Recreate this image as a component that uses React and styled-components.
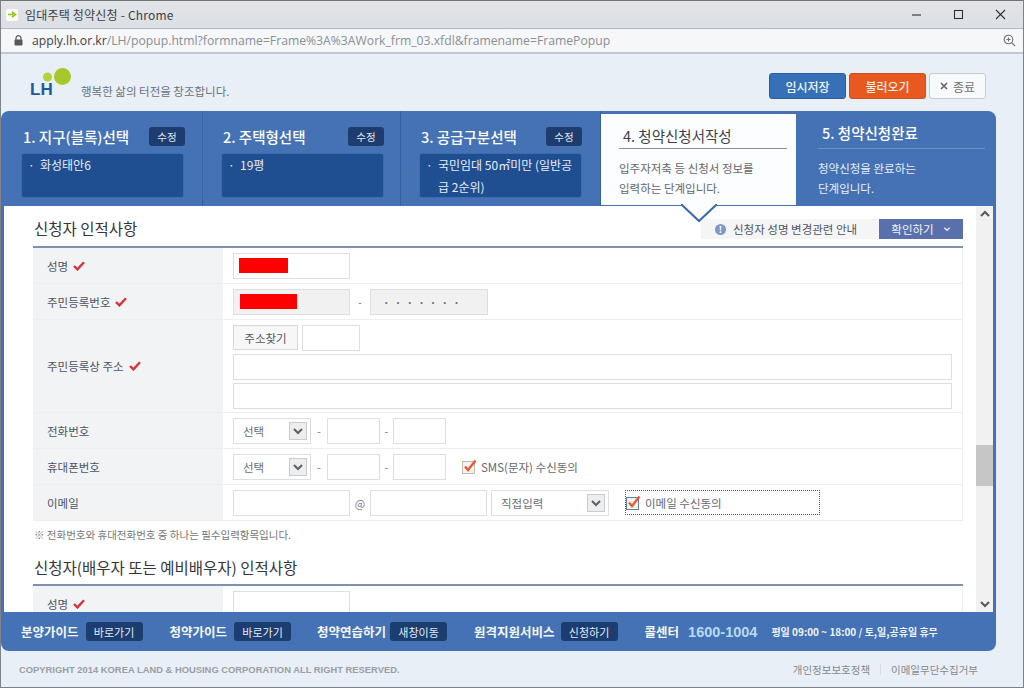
import React from "react";
import styled, { createGlobalStyle } from "styled-components";

const KR = `"Noto Sans CJK KR", "Noto Sans", sans-serif`;

const GlobalStyle = createGlobalStyle`
  html, body { margin: 0; padding: 0; background: #e8eff7; }
  * { box-sizing: border-box; }
  body { font-family: ${KR}; overflow: hidden; }
`;

const Page = styled.div`
  width: 1024px;
  height: 688px;
  display: flex;
  flex-direction: column;
  overflow: hidden;
  position: relative;
  border: 1px solid #7e8388;
  border-top-color: #6f7478;
  background: #e8eff7;
`;

const TitleBar = styled.div`
  height: 28px;
  display: flex;
  align-items: center;
  padding: 0 14px 0 5px;
  background: linear-gradient(#e2e4e7, #dcdfe5);
  border-bottom: 1px solid #b4b8bd;
  color: #3c3f44;
  font-size: 12px;
  flex: none;
`;

const Favicon = styled.span`
  width: 12px;
  height: 12px;
  margin-right: 7px;
  background: #fbfbf4;
  border-radius: 2px;
  display: flex;
  align-items: center;
  justify-content: center;
`;

const TitleText = styled.span`
  flex: 1;
  letter-spacing: 0.2px;
`;

const WindowButtons = styled.div`
  display: flex;
  align-items: center;
  gap: 26px;
`;

const UrlBar = styled.div`
  height: 25px;
  display: flex;
  align-items: center;
  padding: 0 7px 0 13px;
  background: #f6f7f9;
  border-bottom: 2px solid #c5c8cc;
  font-family: "Open Sans", "Noto Sans", sans-serif;
  font-size: 12.2px;
  color: #8a8f96;
  flex: none;
`;

const Host = styled.span`
  color: #3f4347;
  margin-left: 9px;
`;

const Path = styled.span`
  flex: 1;
`;

const TopBar = styled.div`
  height: 57px;
  flex: none;
  display: flex;
  align-items: flex-start;
  justify-content: space-between;
  padding: 12px 37px 0 29px;
`;

const Logo = styled.div`
  position: relative;
  display: flex;
  align-items: flex-end;
  height: 32px;
`;

const LogoMark = styled.div`
  position: relative;
  width: 44px;
  height: 32px;
`;

const LogoBalls = styled.svg`
  position: absolute;
  left: 11px;
  top: 0;
`;

const LogoLetters = styled.span`
  position: absolute;
  left: 0;
  bottom: 0;
  font-family: "Liberation Sans", sans-serif;
  font-weight: 700;
  font-size: 17px;
  line-height: 17px;
  color: #1d5a9c;
`;

const Slogan = styled.span`
  margin-left: 7px;
  font-size: 11.5px;
  line-height: 17px;
  color: #6c7176;
  margin-bottom: -2px;
`;

const TopActions = styled.div`
  display: flex;
  gap: 3px;
  padding-top: 7px;
`;

const ActionButton = styled.button`
  width: ${(p) => p.$w}px;
  height: 26px;
  padding: 0;
  border-radius: 3px;
  border: 1px solid ${(p) => p.$edge};
  background: ${(p) => p.$bg};
  color: ${(p) => p.$fg};
  font-family: ${KR};
  font-size: 12px;
  font-weight: ${(p) => p.$weight};
  display: flex;
  align-items: center;
  justify-content: center;
  gap: 5px;
`;

const Panel = styled.div`
  width: 995px;
  height: 540px;
  flex: none;
  display: flex;
  flex-direction: column;
  background: #4472b5;
  border-radius: 8px;
  position: relative;
`;

const Steps = styled.div`
  height: 95px;
  flex: none;
  display: flex;
`;

const Step = styled.div`
  width: ${(p) => p.$w}px;
  flex: none;
  padding: 15px 0 0 ${(p) => p.$pad}px;
  border-right: 1px solid #35619f;
`;

const StepHead = styled.div`
  width: ${(p) => p.$w}px;
  height: 20px;
  display: flex;
  align-items: center;
  justify-content: space-between;
`;

const StepTitle = styled.span`
  font-size: 14.5px;
  font-weight: 500;
  color: #fff;
  padding-left: 2px;
`;

const Edit = styled.span`
  width: 36px;
  height: 19px;
  border-radius: 3px;
  background: #1e3c6e;
  color: #dfe7f3;
  font-size: 10.5px;
  display: flex;
  align-items: center;
  justify-content: center;
`;

const StepValue = styled.div`
  width: 163px;
  height: 45px;
  margin-top: 7px;
  padding: 0 6px 0 18px;
  position: relative;
  background: #1f4f91;
  border: 1px solid #3d6cae;
  border-radius: 3px;
  color: #e6edf7;
  font-size: 12px;
  line-height: 22px;

  &::before {
    content: "·";
    position: absolute;
    left: 6px;
    top: 0;
  }
`;

const ActiveStep = styled.div`
  width: 195px;
  height: 91px;
  margin-top: 3px;
  padding: 12px 9px 0 18px;
  flex: none;
  background: #fbfdff;
`;

const ActiveTitle = styled.div`
  height: 23px;
  padding-left: 4px;
  font-size: 14.5px;
  line-height: 19px;
  color: #3d4148;
  border-bottom: 1px solid #8c9096;
`;

const StepDesc = styled.p`
  margin: 9px 0 0;
  font-size: 11.5px;
  line-height: 20px;
  color: ${(p) => p.$fg};
`;

const LastStep = styled.div`
  width: 200px;
  flex: none;
  padding: 12px 11px 0 22px;
`;

const LastTitle = styled.div`
  height: 26px;
  padding-left: 4px;
  font-size: 14.5px;
  font-weight: 500;
  line-height: 20px;
  color: #fff;
  border-bottom: 1px solid #6a92c9;
`;

const Pointer = styled.svg`
  position: absolute;
  left: 680px;
  top: 93px;
`;

const Body = styled.div`
  height: 406px;
  margin: 0 3px 0 3px;
  flex: none;
  display: flex;
  background: #fff;
  overflow: hidden;
`;

const Scroller = styled.div`
  width: 972px;
  flex: none;
  overflow: hidden;
  padding-left: 29px;
  padding-right: 13px;
`;

const SectionHead = styled.div`
  height: ${(p) => p.$h}px;
  display: flex;
  align-items: ${(p) => p.$align};
  justify-content: space-between;
  border-bottom: 2px solid #7d93ad;
`;

const SectionTitle = styled.h2`
  margin: 0;
  padding-left: 1px;
  font-size: 15.5px;
  line-height: 22px;
  font-weight: 400;
  color: #33373d;
`;

const Notice = styled.div`
  width: 262px;
  height: 20px;
  margin-top: 13px;
  margin-bottom: 8px;
  display: flex;
  align-items: center;
  background: #f5f5f6;
  font-size: 11.5px;
  color: #4d5561;
`;

const NoticeIcon = styled.span`
  width: 11px;
  height: 11px;
  margin: 0 7px 0 14px;
  border-radius: 50%;
  background: #7f97c6;
  color: #fff;
  font-size: 9px;
  font-weight: 700;
  line-height: 11px;
  text-align: center;
`;

const NoticeText = styled.span`
  flex: 1;
`;

const ConfirmButton = styled.button`
  width: 84px;
  height: 20px;
  padding: 0;
  border: 0;
  background: #5a70ac;
  color: #f2f4fa;
  font-family: ${KR};
  font-size: 11.5px;
  display: flex;
  align-items: center;
  justify-content: center;
  gap: 9px;
`;

const Table = styled.div`
  border-right: 1px solid #eceef0;
`;

const Row = styled.div`
  display: flex;
  height: ${(p) => p.$h}px;
  border-bottom: 1px solid #eceef0;
`;

const Label = styled.div`
  width: 190px;
  flex: none;
  padding-left: 14px;
  display: flex;
  align-items: center;
  gap: 5px;
  background: #f2f3f5;
  font-size: 11.5px;
  color: #4a5464;
`;

const Cell = styled.div`
  flex: 1;
  padding-left: 10px;
  display: flex;
  align-items: center;
`;

const StackCell = styled.div`
  flex: 1;
  padding: 5px 10px 0;
  display: flex;
  flex-direction: column;
  gap: 3px;
`;

const InlineGroup = styled.div`
  display: flex;
  gap: 4px;
`;

const Field = styled.div`
  width: ${(p) => (p.$w ? `${p.$w}px` : "100%")};
  height: 26px;
  flex: none;
  display: flex;
  align-items: center;
  padding-left: ${(p) => p.$pl || 0}px;
  border: 1px solid #dcdee0;
  background: ${(p) => (p.$off ? "#f1f1f2" : "#fff")};
  color: #77797d;
  font-size: 11px;
`;

const Redact = styled.span`
  width: ${(p) => p.$w}px;
  height: 15px;
  background: #f00;
`;

const Dots = styled.span`
  letter-spacing: 5.2px;
  font-size: 11px;
  font-weight: 700;
  color: #6c7075;
`;

const Sep = styled.span`
  width: ${(p) => p.$w}px;
  flex: none;
  text-align: center;
  font-size: 11px;
  color: #7a7d82;
`;

const FindButton = styled.button`
  width: 65px;
  height: 25px;
  padding: 0;
  border: 1px solid #d8d9db;
  background: #f7f7f7;
  color: #55585d;
  font-family: ${KR};
  font-size: 11.5px;
`;

const Select = styled.div`
  width: ${(p) => p.$w}px;
  height: 26px;
  flex: none;
  padding: 0 3px 0 9px;
  display: flex;
  align-items: center;
  justify-content: space-between;
  border: 1px solid #dcdee0;
  background: #fff;
  color: #6b6e73;
  font-size: 11.5px;
`;

const SelectArrow = styled.span`
  width: 18px;
  height: 18px;
  display: flex;
  align-items: center;
  justify-content: center;
  border: 1px solid #c8cccf;
  background: #eceef0;
`;

const Agree = styled.label`
  display: flex;
  align-items: center;
  margin-left: ${(p) => p.$ml}px;
  gap: 4px;
  color: #66696e;
  font-size: 11.5px;
`;

const FocusBox = styled.div`
  width: 195px;
  height: 25px;
  margin-left: 16px;
  display: flex;
  align-items: center;
  border: 1px dotted #555;
`;

const Note = styled.p`
  margin: 0;
  height: 28px;
  padding-left: 1px;
  font-size: 10.5px;
  line-height: 28px;
  color: #74777c;
`;

const Scrollbar = styled.div`
  width: 17px;
  flex: none;
  display: flex;
  flex-direction: column;
  align-items: center;
  background: #f1f1f1;
`;

const ScrollArrow = styled.div`
  height: 17px;
  flex: none;
  display: flex;
  align-items: center;
  justify-content: center;
`;

const ScrollTrack = styled.div`
  flex: 1;
  width: 100%;
  display: flex;
  flex-direction: column;
  padding-top: 222px;
`;

const ScrollThumb = styled.div`
  height: 41px;
  background: #c6c6c6;
`;

const FootBar = styled.div`
  flex: 1;
  display: flex;
  align-items: center;
  padding-left: 20px;
`;

const GuideItem = styled.div`
  display: flex;
  align-items: center;
  margin-right: ${(p) => p.$mr}px;
  gap: ${(p) => p.$gap}px;
`;

const GuideName = styled.span`
  font-size: 12.5px;
  font-weight: 700;
  color: #f4f7fb;
`;

const GuideLink = styled.span`
  width: 57px;
  height: 19px;
  background: #1c3d70;
  border-radius: 3px;
  color: #e3e9f3;
  font-size: 11px;
  display: flex;
  align-items: center;
  justify-content: center;
`;

const Phone = styled.span`
  margin-left: 9px;
  font-family: "Liberation Sans", sans-serif;
  font-size: 14.5px;
  font-weight: 700;
  color: #b7dbf5;
`;

const Hours = styled.span`
  margin-left: 14px;
  font-size: 10px;
  font-weight: 700;
  color: #f0f4fa;
  white-space: nowrap;
`;

const Bottom = styled.div`
  flex: 1;
  display: flex;
  align-items: center;
  justify-content: space-between;
  padding: 0 45px 0 18px;
`;

const Copyright = styled.span`
  font-family: "Liberation Sans", sans-serif;
  font-size: 9.4px;
  font-weight: 700;
  color: #9a9ea3;
`;

const BottomLinks = styled.div`
  display: flex;
  align-items: center;
  font-size: 10.5px;
  color: #85898e;
`;

const Divider = styled.span`
  width: 1px;
  height: 11px;
  margin: 0 10px;
  background: #d8dde3;
`;

const Check = () => (
  <svg width="12" height="10" viewBox="0 0 12 10">
    <path d="M1 5 L4.4 8.4 L11 1.2" fill="none" stroke="#d5343f" strokeWidth="2.4" />
  </svg>
);

const Chevron = ({ color = "#5d6166", size = 12 }) => (
  <svg width={size} height={size} viewBox="0 0 12 12">
    <path d="M2 4 L6 8 L10 4" fill="none" stroke={color} strokeWidth="2" />
  </svg>
);

const CheckBox = ({ edge }) => (
  <svg width="15" height="15" viewBox="0 0 15 15">
    <rect x="0.5" y="2.5" width="12" height="12" fill="#f2f2f2" stroke={edge} />
    <path d="M3 7.5 L6 11 L13.5 1.5" fill="none" stroke="#e0603a" strokeWidth="2.4" />
  </svg>
);

const PhoneSelect = () => (
  <Select $w={78}>
    선택
    <SelectArrow><Chevron /></SelectArrow>
  </Select>
);

const guides = [
  { name: "분양가이드", link: "바로가기", gap: 7, mr: 27 },
  { name: "청약가이드", link: "바로가기", gap: 7, mr: 26 },
  { name: "청약연습하기", link: "새창이동", gap: 4, mr: 27 },
  { name: "원격지원서비스", link: "신청하기", gap: 6, mr: 27 },
];

export default function App() {
  return (
    <Page>
      <GlobalStyle />
      <TitleBar>
        <Favicon>
          <svg width="9" height="7" viewBox="0 0 9 7">
            <path d="M0 3.5 H5 M4 1 L7.5 3.5 L4 6" fill="none" stroke="#8fc31f" strokeWidth="1.6" />
          </svg>
        </Favicon>
        <TitleText>임대주택 청약신청 - Chrome</TitleText>
        <WindowButtons>
          <svg width="16" height="16" viewBox="0 0 16 16">
            <path d="M3 8 H12" stroke="#44474b" strokeWidth="1.3" />
          </svg>
          <svg width="16" height="16" viewBox="0 0 16 16">
            <rect x="3.5" y="3.5" width="8" height="8" fill="none" stroke="#2f3236" strokeWidth="1.1" />
          </svg>
          <svg width="16" height="16" viewBox="0 0 16 16">
            <path d="M3 3 L12 12 M12 3 L3 12" stroke="#2f3236" strokeWidth="1.1" />
          </svg>
        </WindowButtons>
      </TitleBar>
      <UrlBar>
        <svg width="9" height="11" viewBox="0 0 9 11">
          <path d="M2 5 V3.2 a2.5 2.5 0 0 1 5 0 V5" fill="none" stroke="#55585c" strokeWidth="1.2" />
          <rect x="0.5" y="4.6" width="8" height="6" rx="1" fill="#55585c" />
        </svg>
        <Host>apply.lh.or.kr</Host>
        <Path>/LH/popup.html?formname=Frame%3A%3AWork_frm_03.xfdl&amp;framename=FramePopup</Path>
        <svg width="13" height="13" viewBox="0 0 13 13">
          <circle cx="5.5" cy="5.5" r="4.3" fill="none" stroke="#6a6e72" strokeWidth="1.1" />
          <path d="M8.6 8.6 L12 12 M3.5 5.5 H7.5 M5.5 3.5 V7.5" stroke="#6a6e72" strokeWidth="1.1" />
        </svg>
      </UrlBar>
      <TopBar>
        <Logo>
          <LogoMark>
            <LogoBalls width="32" height="24" viewBox="0 0 32 24">
              <circle cx="21.5" cy="10.5" r="8.5" fill="#a5c92c" />
              <circle cx="6.5" cy="11" r="4.5" fill="#b5d23a" />
            </LogoBalls>
            <LogoLetters>LH</LogoLetters>
          </LogoMark>
          <Slogan>행복한 삶의 터전을 창조합니다.</Slogan>
        </Logo>
        <TopActions>
          <ActionButton $w={77} $bg="#3671b8" $edge="#2d5f9e" $fg="#f1f5fb" $weight={500}>임시저장</ActionButton>
          <ActionButton $w={77} $bg="#e8591f" $edge="#cf4e1a" $fg="#fdeee6" $weight={500}>불러오기</ActionButton>
          <ActionButton $w={57} $bg="#f8f9fa" $edge="#c8ccd0" $fg="#6d7074" $weight={400}>
            <svg width="8" height="8" viewBox="0 0 8 8">
              <path d="M1 1 L7 7 M7 1 L1 7" stroke="#5f6368" strokeWidth="1.6" />
            </svg>
            종료
          </ActionButton>
        </TopActions>
      </TopBar>
      <Panel>
        <Steps>
          <Step $w={202} $pad={20}>
            <StepHead $w={164}>
              <StepTitle>1. 지구(블록)선택</StepTitle>
              <Edit>수정</Edit>
            </StepHead>
            <StepValue>화성태안6</StepValue>
          </Step>
          <Step $w={198} $pad={18}>
            <StepHead $w={163}>
              <StepTitle>2. 주택형선택</StepTitle>
              <Edit>수정</Edit>
            </StepHead>
            <StepValue>19평</StepValue>
          </Step>
          <Step $w={200} $pad={18}>
            <StepHead $w={163}>
              <StepTitle>3. 공급구분선택</StepTitle>
              <Edit>수정</Edit>
            </StepHead>
            <StepValue>국민임대 50㎡미만 (일반공급 2순위)</StepValue>
          </Step>
          <ActiveStep>
            <ActiveTitle>4. 청약신청서작성</ActiveTitle>
            <StepDesc $fg="#62666c">입주자저축 등 신청서 정보를<br />입력하는 단계입니다.</StepDesc>
          </ActiveStep>
          <LastStep>
            <LastTitle>5. 청약신청완료</LastTitle>
            <StepDesc $fg="#e8eef7">청약신청을 완료하는<br />단계입니다.</StepDesc>
          </LastStep>
        </Steps>
        <Body>
          <Scroller>
            <SectionHead $h={42} $align="flex-start">
              <SectionTitle as="h2" style={{ marginTop: 11 }}>신청자 인적사항</SectionTitle>
              <Notice>
                <NoticeIcon>!</NoticeIcon>
                <NoticeText>신청자 성명 변경관련 안내</NoticeText>
                <ConfirmButton>
                  확인하기
                  <Chevron color="#e6eaf4" size={8} />
                </ConfirmButton>
              </Notice>
            </SectionHead>
            <Table>
              <Row $h={36}>
                <Label>성명 <Check /></Label>
                <Cell><Field $w={117} $pl={5}><Redact $w={49} /></Field></Cell>
              </Row>
              <Row $h={36}>
                <Label>주민등록번호 <Check /></Label>
                <Cell>
                  <Field $w={117} $pl={6} $off><Redact $w={57} /></Field>
                  <Sep $w={20}>-</Sep>
                  <Field $w={118} $pl={12} $off><Dots>·······</Dots></Field>
                </Cell>
              </Row>
              <Row $h={93}>
                <Label>주민등록상 주소 <Check /></Label>
                <StackCell>
                  <InlineGroup>
                    <FindButton>주소찾기</FindButton>
                    <Field $w={58} />
                  </InlineGroup>
                  <Field />
                  <Field />
                </StackCell>
              </Row>
              <Row $h={36}>
                <Label>전화번호</Label>
                <Cell>
                  <PhoneSelect />
                  <Sep $w={16}>-</Sep>
                  <Field $w={53} />
                  <Sep $w={13}>-</Sep>
                  <Field $w={53} />
                </Cell>
              </Row>
              <Row $h={36}>
                <Label>휴대폰번호</Label>
                <Cell>
                  <PhoneSelect />
                  <Sep $w={16}>-</Sep>
                  <Field $w={53} />
                  <Sep $w={13}>-</Sep>
                  <Field $w={53} />
                  <Agree $ml={16}><CheckBox edge="#c9b7a8" />SMS(문자) 수신동의</Agree>
                </Cell>
              </Row>
              <Row $h={36}>
                <Label>이메일</Label>
                <Cell>
                  <Field $w={117} />
                  <Sep $w={20}>@</Sep>
                  <Field $w={117} />
                  <Select $w={118} style={{ marginLeft: 4 }}>
                    직접입력
                    <SelectArrow><Chevron /></SelectArrow>
                  </Select>
                  <FocusBox>
                    <Agree $ml={0}><CheckBox edge="#5c7f9e" />이메일 수신동의</Agree>
                  </FocusBox>
                </Cell>
              </Row>
            </Table>
            <Note>※ 전화번호와 휴대전화번호 중 하나는 필수입력항목입니다.</Note>
            <SectionHead $h={37} $align="center">
              <SectionTitle>신청자(배우자 또는 예비배우자) 인적사항</SectionTitle>
            </SectionHead>
            <Table>
              <Row $h={36}>
                <Label>성명 <Check /></Label>
                <Cell><Field $w={117} /></Cell>
              </Row>
            </Table>
          </Scroller>
          <Scrollbar>
            <ScrollArrow style={{ transform: "rotate(180deg)" }}><Chevron color="#55585c" /></ScrollArrow>
            <ScrollTrack><ScrollThumb /></ScrollTrack>
            <ScrollArrow><Chevron color="#55585c" /></ScrollArrow>
          </Scrollbar>
        </Body>
        <FootBar>
          {guides.map((g) => (
            <GuideItem key={g.name} $gap={g.gap} $mr={g.mr}>
              <GuideName>{g.name}</GuideName>
              <GuideLink>{g.link}</GuideLink>
            </GuideItem>
          ))}
          <GuideName>콜센터</GuideName>
          <Phone>1600-1004</Phone>
          <Hours>평일 09:00 ~ 18:00 / 토,일,공휴일 휴무</Hours>
        </FootBar>
        <Pointer width="36" height="20" viewBox="0 0 36 20">
          <path d="M0 0 L18 17 L36 0" fill="#fbfdff" stroke="#3e6aa8" strokeWidth="2" />
        </Pointer>
      </Panel>
      <Bottom>
        <Copyright>COPYRIGHT 2014 KOREA LAND &amp; HOUSING CORPORATION ALL RIGHT RESERVED.</Copyright>
        <BottomLinks>
          개인정보보호정책
          <Divider />
          이메일무단수집거부
        </BottomLinks>
      </Bottom>
    </Page>
  );
}
